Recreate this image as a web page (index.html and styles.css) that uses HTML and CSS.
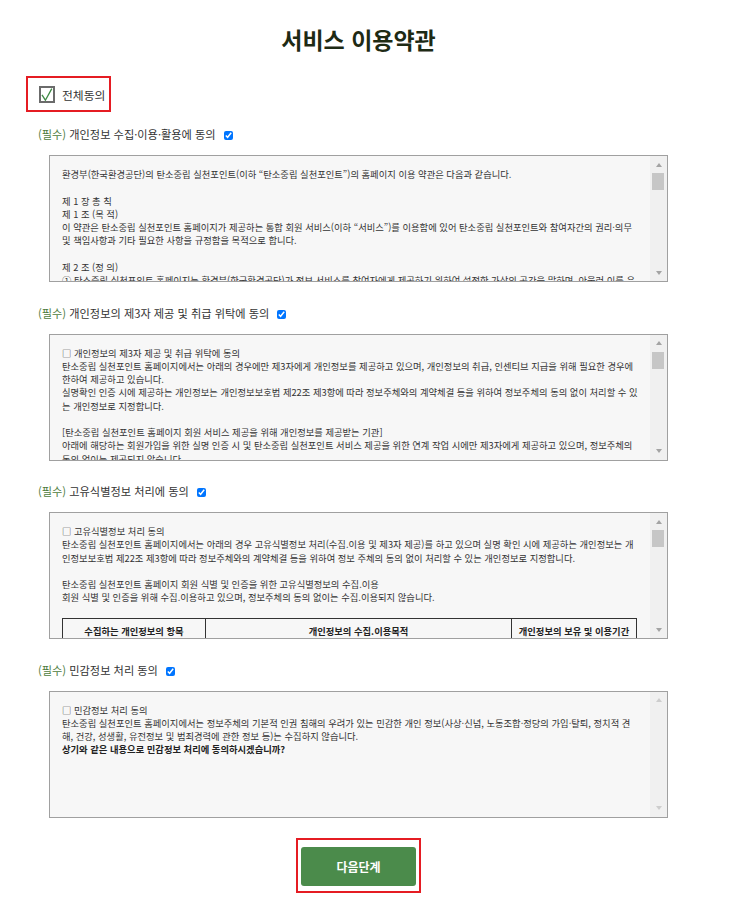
FILE: index.html
```
<!DOCTYPE html>
<html lang="ko">
  <head>
    <meta charset="UTF-8" />
    <meta name="viewport" content="width=device-width, initial-scale=1.0" />
    <link rel="stylesheet" href="styles.css">
    <title>서비스 이용약관</title>
  </head>
  <body>
    <div class="wrap">
      <h1>서비스 이용약관</h1>

      <label class="all">
        <span class="all-box">
          <svg width="12" height="13" viewBox="0 0 12 13"><path d="M1 6.8 L4.4 12.2 L10.8 0.6" fill="none" stroke="#3f8a45" stroke-width="1.3"/></svg>
        </span>
        전체동의
      </label>

      <div class="section">
        <div class="label"><span class="req">(필수)</span> 개인정보 수집·이용·활용에 동의 <input type="checkbox" class="chk" checked></div>
        <div class="terms">
          <div class="terms-body">
            환경부(한국환경공단)의 탄소중립 실천포인트(이하 “탄소중립 실천포인트”)의 홈페이지 이용 약관은 다음과 같습니다.<br>
            <br>
            제 1 장 총 칙<br>
            제 1 조 (목 적)<br>
            이 약관은 탄소중립 실천포인트 홈페이지가 제공하는 통합 회원 서비스(이하 “서비스”)를 이용함에 있어 탄소중립 실천포인트와 참여자간의 권리·의무<br>
            및 책임사항과 기타 필요한 사항을 규정함을 목적으로 합니다.<br>
            <br>
            제 2 조 (정 의)<br>
            ① 탄소중립 실천포인트 홈페이지는 환경부(한국환경공단)가 정보 서비스를 참여자에게 제공하기 위하여 설정한 가상의 공간을 말하며, 아울러 이를 운<br>
            영하는 사업자의 의미로도 사용합니다.<br>
            ② “참여자”란 탄소중립 실천포인트 홈페이지에 접속하여 이 약관에 따라 탄소중립 실천포인트가 제공하는 서비스를 받는 회원을 말합니다.<br>
            ③ “회원”이라 함은 탄소중립 실천포인트 홈페이지에 개인정보를 제공하여 회원등록을 한 자로서, 탄소중립 실천포인트의 정보를 지속적으로<br>
            제공받으며, 탄소중립 실천포인트가 제공하는 서비스를 계속적으로 이용할 수 있는 자를 말합니다.<br>
            <br>
            제 3 조 (약관의 명시와 개정)<br>
            ① 탄소중립 실천포인트는 이 약관의 내용과 주소지, 관리자의 성명, 개인정보보호 책임자의 성명, 연락처 등을 참여자가 알 수 있도록 홈페이지의<br>
            초기 서비스화면에 게시합니다.<br>
            ② 탄소중립 실천포인트는 약관의 규제에 관한 법률, 정보통신망 이용촉진 및 정보보호 등에 관한 법률 등 관련법을 위배하지 않는 범위에서<br>
            이 약관을 개정할 수 있습니다.<br>
            ③ 탄소중립 실천포인트가 약관을 개정할 경우에는 적용일자 및 개정사유를 명시하여 현행약관과 함께 홈페이지의 초기화면에 그 적용일자<br>
            7일 이전부터 적용일자 전일까지 공지합니다.<br>
            <br>
            제 4 조 (약관 외 준칙)<br>
            이 약관에서 정하지 아니한 사항과 이 약관의 해석에 관하여는 관계법령 및 상관례에 따릅니다.<br>
            <br>
            제 2 장 회원가입<br>
            제 5 조 (회원가입)<br>
            ① 참여자는 탄소중립 실천포인트가 정한 가입 양식에 따라 회원정보를 기입한 후 이 약관에 동의한다는 의사표시를 함으로서 회원가입을 신청합니다.<br>
            ② 탄소중립 실천포인트는 제1항과 같이 회원으로 가입할 것을 신청한 참여자 중 다음 각 호에 해당하지 않는 한 회원으로 등록합니다.<br>
            1. 가입신청자가 이 약관에 의하여 이전에 회원자격을 상실한 적이 있는 경우<br>
            2. 등록 내용에 허위, 기재누락, 오기가 있는 경우<br>
            3. 기타 회원으로 등록하는 것이 탄소중립 실천포인트의 기술상 현저히 지장이 있다고 판단되는 경우<br>
            <br>
            제 6 조 (회원 탈퇴 및 자격 상실 등)<br>
            ① 회원은 탄소중립 실천포인트에 언제든지 탈퇴를 요청할 수 있으며 탄소중립 실천포인트는 즉시 회원탈퇴를 처리합니다.<br>
            ② 회원이 다음 각 호의 사유에 해당하는 경우, 탄소중립 실천포인트는 회원자격을 제한 및 정지시킬 수 있습니다.<br>
            1. 가입 신청 시에 허위 내용을 등록한 경우<br>
            2. 다른 사람의 홈페이지 이용을 방해하거나 그 정보를 도용하는 등 질서를 위협하는 경우<br>
            3. 홈페이지를 이용하여 법령 또는 이 약관이 금지하거나 공서양속에 반하는 행위를 하는 경우<br>
            <br>
            제 7 조 (회원에 대한 통지)<br>
            ① 탄소중립 실천포인트가 회원에 대한 통지를 하는 경우, 회원이 등록한 전자우편 주소로 할 수 있습니다.<br>
            ② 탄소중립 실천포인트는 불특정다수 회원에 대한 통지의 경우 1주일 이상 홈페이지 게시판에 게시함으로서 개별 통지에 갈음할 수 있습니다.<br>
            <br>
            제 3 장 서비스 이용<br>
            제 8 조 (서비스의 제공 및 변경)<br>
            ① 탄소중립 실천포인트는 다음과 같은 서비스를 제공합니다.<br>
            1. 탄소중립 실천포인트 참여 신청 및 인센티브 조회<br>
            2. 탄소중립 실천 활동 관련 정보 제공<br>
            3. 기타 탄소중립 실천포인트가 정하는 서비스
          </div>
          <div class="scrollbar">
            <span class="sb-up"></span>
            <span class="sb-thumb"></span>
            <span class="sb-track"></span>
            <span class="sb-down"></span>
          </div>
        </div>
      </div>

      <div class="section">
        <div class="label"><span class="req">(필수)</span> 개인정보의 제3자 제공 및 취급 위탁에 동의 <input type="checkbox" class="chk" checked></div>
        <div class="terms">
          <div class="terms-body">
            □ 개인정보의 제3자 제공 및 취급 위탁에 동의<br>
            탄소중립 실천포인트 홈페이지에서는 아래의 경우에만 제3자에게 개인정보를 제공하고 있으며, 개인정보의 취급, 인센티브 지급을 위해 필요한 경우에<br>
            한하여 제공하고 있습니다.<br>
            실명확인 인증 시에 제공하는 개인정보는 개인정보보호법 제22조 제3항에 따라 정보주체와의 계약체결 등을 위하여 정보주체의 동의 없이 처리할 수 있<br>
            는 개인정보로 지정합니다.<br>
            <br>
            [탄소중립 실천포인트 홈페이지 회원 서비스 제공을 위해 개인정보를 제공받는 기관]<br>
            아래에 해당하는 회원가입을 위한 실명 인증 시 및 탄소중립 실천포인트 서비스 제공을 위한 연계 작업 시에만 제3자에게 제공하고 있으며, 정보주체의<br>
            동의 없이는 제공되지 않습니다.<br>
            <br>
            1. 개인정보를 제공받는 자 : 한국사회보장정보원, 지방자치단체, 한국전력공사, 한국환경공단<br>
            2. 제공받는 자의 개인정보 이용 목적 : 실명 확인, 탄소중립 실천포인트 참여 확인 및 인센티브 지급<br>
            3. 제공하는 개인정보의 항목 : 성명, 생년월일, 성별, 주소, 연락처, 고객번호<br>
            4. 제공받는 자의 개인정보 보유 및 이용기간 : 회원 탈퇴 시까지<br>
            <br>
            [개인정보 취급 위탁]<br>
            탄소중립 실천포인트는 원활한 서비스 제공을 위하여 아래와 같이 개인정보 취급 업무를 위탁하고 있습니다.<br>
            1. 수탁업체 : 시스템 운영 및 유지보수 업체<br>
            2. 위탁업무 내용 : 홈페이지 운영 및 시스템 유지보수, 인센티브 지급 관련 업무<br>
            3. 보유 및 이용기간 : 위탁계약 종료 시까지<br>
            <br>
            위탁업체가 변경될 경우 홈페이지를 통하여 공지하며, 위탁 계약 시 개인정보가 안전하게 관리될 수 있도록 필요한 사항을 규정하고 있습니다.<br>
            <br>
            [인센티브 지급을 위한 개인정보 제공]<br>
            1. 제공받는 자 : 인센티브 지급 기관 및 지방자치단체<br>
            2. 이용 목적 : 탄소포인트 산정 및 인센티브 지급<br>
            3. 제공 항목 : 성명, 주소, 연락처, 계좌정보, 에너지 사용량<br>
            4. 보유 및 이용기간 : 인센티브 지급 완료 후 5년<br>
            <br>
            귀하는 개인정보의 제3자 제공 및 취급 위탁에 대한 동의를 거부할 권리가 있으며,<br>
            동의를 거부할 경우 회원가입 및 서비스 이용이 제한될 수 있습니다.<br>
            <br>
            상기와 같은 내용으로 개인정보의 제3자 제공 및 취급 위탁에 동의하시겠습니까?
          </div>
          <div class="scrollbar">
            <span class="sb-up"></span>
            <span class="sb-thumb"></span>
            <span class="sb-track"></span>
            <span class="sb-down"></span>
          </div>
        </div>
      </div>

      <div class="section">
        <div class="label"><span class="req">(필수)</span> 고유식별정보 처리에 동의 <input type="checkbox" class="chk" checked></div>
        <div class="terms">
          <div class="terms-body">
            □ 고유식별정보 처리 동의<br>
            탄소중립 실천포인트 홈페이지에서는 아래의 경우 고유식별정보 처리(수집.이용 및 제3자 제공)를 하고 있으며 실명 확인 시에 제공하는 개인정보는 개<br>
            인정보보호법 제22조 제3항에 따라 정보주체와의 계약체결 등을 위하여 정보 주체의 동의 없이 처리할 수 있는 개인정보로 지정합니다.<br>
            <br>
            탄소중립 실천포인트 홈페이지 회원 식별 및 인증을 위한 고유식별정보의 수집.이용<br>
            회원 식별 및 인증을 위해 수집.이용하고 있으며, 정보주체의 동의 없이는 수집.이용되지 않습니다.<br>
            <br>
            <table class="info">
              <tr>
                <th class="c1">수집하는 개인정보의 항목</th>
                <th class="c2">개인정보의 수집.이용목적</th>
                <th>개인정보의 보유 및 이용기간</th>
              </tr>
              <tr>
                <td>주민등록번호</td>
                <td>실명 확인 및 본인 인증, 중복가입 방지</td>
                <td>실명 확인 후 즉시 파기</td>
              </tr>
              <tr>
                <td>연계정보(CI)</td>
                <td>회원 식별 및 탄소중립 실천포인트 참여 확인</td>
                <td>회원 탈퇴 시까지</td>
              </tr>
              <tr>
                <td>중복가입확인정보(DI)</td>
                <td>중복가입 확인 및 부정이용 방지</td>
                <td>회원 탈퇴 시까지</td>
              </tr>
            </table>
            <br>
            탄소중립 실천포인트 인센티브 지급을 위한 고유식별정보의 제3자 제공<br>
            1. 제공받는 자 : 지방자치단체, 한국환경공단<br>
            2. 제공 목적 : 인센티브 지급 대상자 확인<br>
            3. 제공 항목 : 주민등록번호<br>
            4. 보유 및 이용기간 : 인센티브 지급 완료 후 즉시 파기<br>
            <br>
            귀하는 고유식별정보 처리에 대한 동의를 거부할 권리가 있으며,<br>
            동의를 거부할 경우 회원가입 및 서비스 이용이 제한될 수 있습니다.<br>
            <br>
            <strong>상기와 같은 내용으로 고유식별정보 처리에 동의하시겠습니까?</strong>
          </div>
          <div class="scrollbar">
            <span class="sb-up"></span>
            <span class="sb-thumb"></span>
            <span class="sb-track"></span>
            <span class="sb-down"></span>
          </div>
        </div>
      </div>

      <div class="section">
        <div class="label"><span class="req">(필수)</span> 민감정보 처리 동의 <input type="checkbox" class="chk" checked></div>
        <div class="terms">
          <div class="terms-body">
            □ 민감정보 처리 동의<br>
            탄소중립 실천포인트 홈페이지에서는 정보주체의 기본적 인권 침해의 우려가 있는 민감한 개인 정보(사상·신념, 노동조합·정당의 가입·탈퇴, 정치적 견<br>
            해, 건강, 성생활, 유전정보 및 범죄경력에 관한 정보 등)는 수집하지 않습니다.<br>
            <strong>상기와 같은 내용으로 민감정보 처리에 동의하시겠습니까?</strong>
          </div>
          <div class="scrollbar scrollbar-off">
            <span class="sb-up"></span>
            <span class="sb-track"></span>
            <span class="sb-down"></span>
          </div>
        </div>
      </div>

      <div class="next">
        <div class="next-frame">
          <button type="button" class="btn">다음단계</button>
        </div>
      </div>
    </div>
  </body>
</html>
```

FILE: styles.css
```
body {
  margin: 0;
  font-family: "Noto Sans CJK KR", "Malgun Gothic", sans-serif;
  color: #333;
  background-color: #fff;
}

.wrap {
  width: 619px;
  margin-left: 49px;
  padding: 24px 0 4px;
}

h1 {
  margin: 0;
  font-size: 23px;
  line-height: 30px;
  font-weight: 700;
  text-align: center;
  color: #1e2a14;
}

.all {
  display: flex;
  align-items: center;
  width: 85px;
  height: 36px;
  box-sizing: border-box;
  margin: 22px 0 0 -23px;
  padding-left: 11px;
  border: 2px solid #e51c23;
  font-size: 11.8px;
  color: #333;
}

.all-box {
  display: flex;
  align-items: center;
  justify-content: center;
  width: 16px;
  height: 17px;
  box-sizing: border-box;
  margin-right: 7px;
  border: 2px solid #6b6b6b;
  background-color: #fff;
}

.section {
  margin-top: 22.5px;
}

.all + .section {
  margin-top: 14px;
}

.label {
  margin: 0 0 13px -11px;
  font-size: 11.2px;
  line-height: 16px;
  color: #333;
}

.req {
  color: #4d7c3d;
}

.chk {
  width: 9px;
  height: 9px;
  margin: 0 0 0 5px;
  vertical-align: -1px;
}

.terms {
  display: flex;
  height: 127px;
  box-sizing: border-box;
  border: 1px solid #a0a0a0;
  background-color: #f7f7f7;
}

.terms-body {
  flex: 1;
  min-width: 0;
  padding: 12px 13px 0 12px;
  overflow: hidden;
  white-space: nowrap;
  font-size: 9.3px;
  line-height: 13.25px;
  color: #333;
}

.terms-body strong {
  color: #222;
}

/* scrollbar drawn like the classic windows one */
.scrollbar {
  display: flex;
  flex-direction: column;
  flex: none;
  width: 17px;
  background-color: #f0f0f0;
}

.sb-up,
.sb-down {
  display: flex;
  align-items: center;
  justify-content: center;
  height: 17px;
}

.sb-up::before {
  content: "";
  border-left: 3.5px solid transparent;
  border-right: 3.5px solid transparent;
  border-bottom: 4px solid #a3a3a3;
}

.sb-down::before {
  content: "";
  border-left: 3.5px solid transparent;
  border-right: 3.5px solid transparent;
  border-top: 4px solid #a3a3a3;
}

.sb-thumb {
  height: 17px;
  margin: 0 3px 0 2px;
  background-color: #c6c6c6;
}

.sb-track {
  flex: 1;
}

.scrollbar-off .sb-up::before {
  border-bottom-color: #cdcdcd;
}

.scrollbar-off .sb-down::before {
  border-top-color: #cdcdcd;
}

.info {
  width: 100%;
  border-collapse: collapse;
  white-space: normal;
  font-size: 9.3px;
  line-height: 13.25px;
}

.info th,
.info td {
  padding: 6px 4px;
  border: 1px solid #333;
  text-align: center;
}

.info th {
  font-weight: 700;
  color: #222;
}

.info .c1 {
  width: 134px;
}

.info .c2 {
  width: 297px;
}

.next {
  display: flex;
  justify-content: center;
  margin-top: 20.5px;
}

.next-frame {
  padding: 7px 3px 5px;
  border: 2px solid #e51c23;
}

.btn {
  display: block;
  width: 115px;
  height: 39px;
  border: none;
  border-radius: 3px;
  background-color: #4b8b4b;
  color: #fff;
  font-family: inherit;
  font-size: 12px;
  font-weight: 700;
  cursor: pointer;
}
```
